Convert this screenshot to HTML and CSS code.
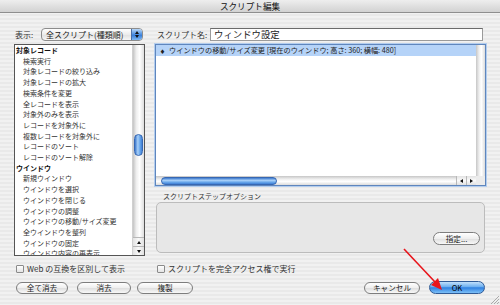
FILE: index.html
```html
<!DOCTYPE html>
<html lang="ja">
<head>
    <meta charset="UTF-8">
    <title>スクリプト編集</title>
    <link rel="stylesheet" href="styles.css">
</head>
<body>
    <div class="titlebar">スクリプト編集</div>

    <div class="top-row">
        <div class="view-group">
            <span class="label">表示:</span>
            <div class="popup">
                <span class="popup-text">全スクリプト(種類順)</span>
                <span class="popup-arrows"><i class="up"></i><i class="down"></i></span>
            </div>
        </div>
        <span class="label name-label">スクリプト名:</span>
        <div class="textfield">ウィンドウ設定</div>
    </div>

    <div class="main">
        <div class="list">
            <div class="list-items">
                <div class="item head">対象レコード</div>
                <div class="item">検索実行</div>
                <div class="item">対象レコードの絞り込み</div>
                <div class="item">対象レコードの拡大</div>
                <div class="item">検索条件を変更</div>
                <div class="item">全レコードを表示</div>
                <div class="item">対象外のみを表示</div>
                <div class="item">レコードを対象外に</div>
                <div class="item">複数レコードを対象外に</div>
                <div class="item">レコードのソート</div>
                <div class="item">レコードのソート解除</div>
                <div class="item head">ウインドウ</div>
                <div class="item">新規ウインドウ</div>
                <div class="item">ウインドウを選択</div>
                <div class="item">ウインドウを閉じる</div>
                <div class="item">ウインドウの調整</div>
                <div class="item">ウインドウの移動/サイズ変更</div>
                <div class="item">全ウインドウを整列</div>
                <div class="item">ウインドウの固定</div>
                <div class="item">ウインドウ内容の再表示</div>
            </div>
            <div class="vscroll">
                <div class="vthumb"></div>
                <div class="vspacer"></div>
                <div class="varrow"><i class="up"></i></div>
                <div class="varrow"><i class="down"></i></div>
            </div>
        </div>

        <div class="right">
            <div class="steps">
                <div class="step-rows">
                    <div class="step selected"><span class="diamond">&#9830;</span>ウインドウの移動/サイズ変更 [現在のウインドウ; 高さ: 360; 横幅: 480]</div>
                </div>
                <div class="steps-vtrack"></div>
                <div class="hscroll">
                    <div class="hthumb"></div>
                    <div class="hspacer"></div>
                    <div class="harrow"><i class="left"></i></div>
                    <div class="harrow"><i class="right"></i></div>
                </div>
                <div class="corner"></div>
            </div>
            <div class="options-label">スクリプトステップオプション</div>
            <div class="options">
                <button class="aqua spec">指定...</button>
            </div>
        </div>
    </div>

    <div class="check-row">
        <label class="check first"><span class="box"></span>Web の互換を区別して表示</label>
        <label class="check"><span class="box"></span>スクリプトを完全アクセス権で実行</label>
    </div>

    <div class="button-row">
        <button class="aqua b1">全て消去</button>
        <button class="aqua b2">消去</button>
        <button class="aqua b3">複製</button>
        <div class="grow"></div>
        <button class="aqua b4">キャンセル</button>
        <button class="aqua ok">OK</button>
    </div>

    <svg class="annotation" width="500" height="305" viewBox="0 0 500 305">
        <line x1="404" y1="249" x2="435" y2="282" stroke="#e8141b" stroke-width="1.6"/>
        <polygon points="442,290 431,285 438,278" fill="#e8141b"/>
    </svg>

    <svg class="grip" width="10" height="10" viewBox="0 0 10 10">
        <line x1="2" y1="10" x2="10" y2="2" stroke="#999" stroke-width="0.8"/>
        <line x1="5" y1="10" x2="10" y2="5" stroke="#999" stroke-width="0.8"/>
        <line x1="8" y1="10" x2="10" y2="8" stroke="#999" stroke-width="0.8"/>
    </svg>
</body>
</html>
```

FILE: styles.css
```css
body {
    margin: 0;
    width: 500px;
    height: 305px;
    overflow: hidden;
    position: relative;
    font-family: "Noto Sans CJK JP", "Noto Sans", sans-serif;
    font-size: 7px;
    color: #222;
    background: repeating-linear-gradient(#f1f1f1 0, #f1f1f1 2px, #e9e9e9 2px, #e9e9e9 4px);
}

.titlebar {
    height: 13px;
    box-sizing: border-box;
    border-bottom: 1px solid #8e8e8e;
    background: linear-gradient(#eeeeee, #d2d2d2);
    text-align: center;
    font-size: 8.6px;
    line-height: 12px;
    color: #111;
}

.top-row {
    display: flex;
    align-items: center;
    height: 14px;
    margin-top: 14px;
    padding-left: 15px;
}

.view-group {
    display: flex;
    align-items: center;
    width: 128px;
}

.label {
    width: 26px;
    font-size: 8px;
    color: #333;
}

.popup {
    width: 102px;
    height: 13px;
    box-sizing: border-box;
    border: 1px solid #8c8c8c;
    border-radius: 4px;
    background: linear-gradient(#ffffff, #ececec 50%, #e0e0e0 51%, #f6f6f6);
    display: flex;
    align-items: center;
    overflow: hidden;
}

.popup-text {
    flex: 1;
    padding-left: 4px;
    font-size: 8px;
    white-space: nowrap;
}

.popup-arrows {
    width: 10px;
    height: 100%;
    background: linear-gradient(#b9d8f8, #4a8de0 50%, #2f76d6 51%, #7db8f2);
    border-left: 1px solid #4a6fa5;
    display: flex;
    flex-direction: column;
    align-items: center;
    justify-content: center;
    gap: 1px;
}

.popup-arrows i,
.varrow i,
.harrow i {
    width: 0;
    height: 0;
    border-left: 2px solid transparent;
    border-right: 2px solid transparent;
}

.up {
    border-bottom: 3px solid #111;
}

.down {
    border-top: 3px solid #111;
}

.name-label {
    margin-left: 14px;
    width: 53px;
}

.textfield {
    width: 273px;
    height: 13px;
    box-sizing: border-box;
    border: 1px solid #9a9a9a;
    border-top-color: #6b6b6b;
    background: #fff;
    padding-left: 3px;
    line-height: 11px;
    font-size: 9.4px;
}

.main {
    display: flex;
    gap: 10px;
    margin-top: 3px;
    padding-left: 14px;
    height: 212px;
}

.list {
    width: 131px;
    height: 212px;
    box-sizing: border-box;
    border: 1px solid #555;
    background: #fff;
    display: flex;
}

.list-items {
    flex: 1;
    overflow: hidden;
}

.item {
    line-height: 10.7px;
    padding-left: 8px;
    white-space: nowrap;
    color: #333;
}

.item.head {
    padding-left: 1px;
    font-weight: bold;
    color: #111;
}

.vscroll {
    width: 11px;
    display: flex;
    flex-direction: column;
    border-left: 1px solid #d0d0d0;
    background: linear-gradient(to right, #c4c4c4, #eeeeee 30%, #ffffff 60%, #dedede);
}

.vthumb {
    margin: 89px 1px 0 1px;
    height: 22px;
    border-radius: 5px;
    border: 1px solid #3768b3;
    box-sizing: border-box;
    background: linear-gradient(to right, #3c78cd, #a8d0f8 40%, #6aa8ec 70%, #3f7fd4);
}

.vspacer {
    flex: 1;
}

.varrow {
    height: 8px;
    display: flex;
    align-items: center;
    justify-content: center;
    border-top: 1px solid #b8b8b8;
    background: linear-gradient(to right, #e2e2e2, #fafafa 50%, #e0e0e0);
}

.right {
    width: 331px;
    display: flex;
    flex-direction: column;
}

.steps {
    height: 142px;
    box-sizing: border-box;
    border: 1px solid #5f86bd;
    box-shadow: 0 0 0 1px #b3cdee;
    background: #fff;
    display: grid;
    grid-template-columns: 1fr 9px;
    grid-template-rows: 1fr 9px;
}

.step-rows {
    overflow: hidden;
}

.step {
    line-height: 11px;
    white-space: nowrap;
    padding-left: 4px;
    font-size: 7.2px;
}

.step.selected {
    background: #b5d3f8;
}

.diamond {
    font-size: 5px;
    display: inline-block;
    width: 9px;
}

.steps-vtrack {
    background: linear-gradient(to right, #c6c6c6, #efefef 35%, #ffffff 60%, #dcdcdc);
}

.hscroll {
    display: flex;
    align-items: center;
    background: linear-gradient(#c6c6c6, #efefef 35%, #ffffff 60%, #dcdcdc);
}

.hthumb {
    width: 116px;
    height: 8px;
    margin-left: 5px;
    box-sizing: border-box;
    border: 1px solid #3768b3;
    border-radius: 4px;
    background: linear-gradient(#3c78cd, #a8d0f8 40%, #6aa8ec 70%, #3f7fd4);
}

.hspacer {
    flex: 1;
}

.harrow {
    width: 9px;
    height: 100%;
    display: flex;
    align-items: center;
    justify-content: center;
    border-left: 1px solid #b8b8b8;
    background: linear-gradient(#e2e2e2, #fafafa 50%, #e0e0e0);
}

.harrow i {
    border-left: 0;
    border-right: 0;
    border-top: 2px solid transparent;
    border-bottom: 2px solid transparent;
}

.harrow i.left {
    border-right: 3px solid #111;
}

.harrow i.right {
    border-left: 3px solid #111;
}

.corner {
    background: #ececec;
}

.options-label {
    margin-top: 5px;
    padding-left: 8px;
    line-height: 10px;
    height: 10px;
    color: #333;
}

.options {
    margin: 1px 1px 0 1px;
    height: 51px;
    box-sizing: border-box;
    border: 1px solid #bcbcbc;
    border-radius: 5px;
    background: #e7e7e7;
    display: flex;
    align-items: flex-end;
    justify-content: flex-end;
    padding: 0 4px 7px 0;
}

.aqua {
    height: 12px;
    box-sizing: border-box;
    padding: 0;
    border: 1px solid #7d7d7d;
    border-radius: 7px;
    background: linear-gradient(#ffffff, #eeeeee 50%, #dedede 51%, #f8f8f8);
    font-family: "Noto Sans CJK JP", "Noto Sans", sans-serif;
    font-size: 7.6px;
    color: #222;
    line-height: 10px;
}

.spec {
    width: 47px;
    height: 13px;
}

.check-row {
    display: flex;
    align-items: center;
    height: 9px;
    margin-top: 8px;
    padding-left: 16px;
}

.check {
    display: flex;
    align-items: center;
    color: #333;
    font-size: 8px;
    white-space: nowrap;
}

.check.first {
    width: 141px;
}

.box {
    width: 8px;
    height: 8px;
    box-sizing: border-box;
    border: 1px solid #8a8a8a;
    border-radius: 1px;
    background: linear-gradient(#ffffff, #e4e4e4);
    margin-right: 3px;
}

.button-row {
    display: flex;
    align-items: center;
    height: 13px;
    margin-top: 8px;
    padding: 0 15px 0 16px;
}

.b1 {
    width: 52px;
}

.b2 {
    width: 54px;
    margin-left: 9px;
}

.b3 {
    width: 56px;
    margin-left: 6px;
}

.grow {
    flex: 1;
}

.b4 {
    width: 56px;
}

.ok {
    width: 56px;
    height: 13px;
    margin-left: 9px;
    border-color: #2f5a96;
    background: linear-gradient(#c2e0fb, #6aaef0 45%, #2f80e0 52%, #7cc0f8);
    color: #000;
}

.annotation {
    position: absolute;
    left: 0;
    top: 0;
    pointer-events: none;
}

.grip {
    position: absolute;
    right: 1px;
    bottom: 1px;
}
```
